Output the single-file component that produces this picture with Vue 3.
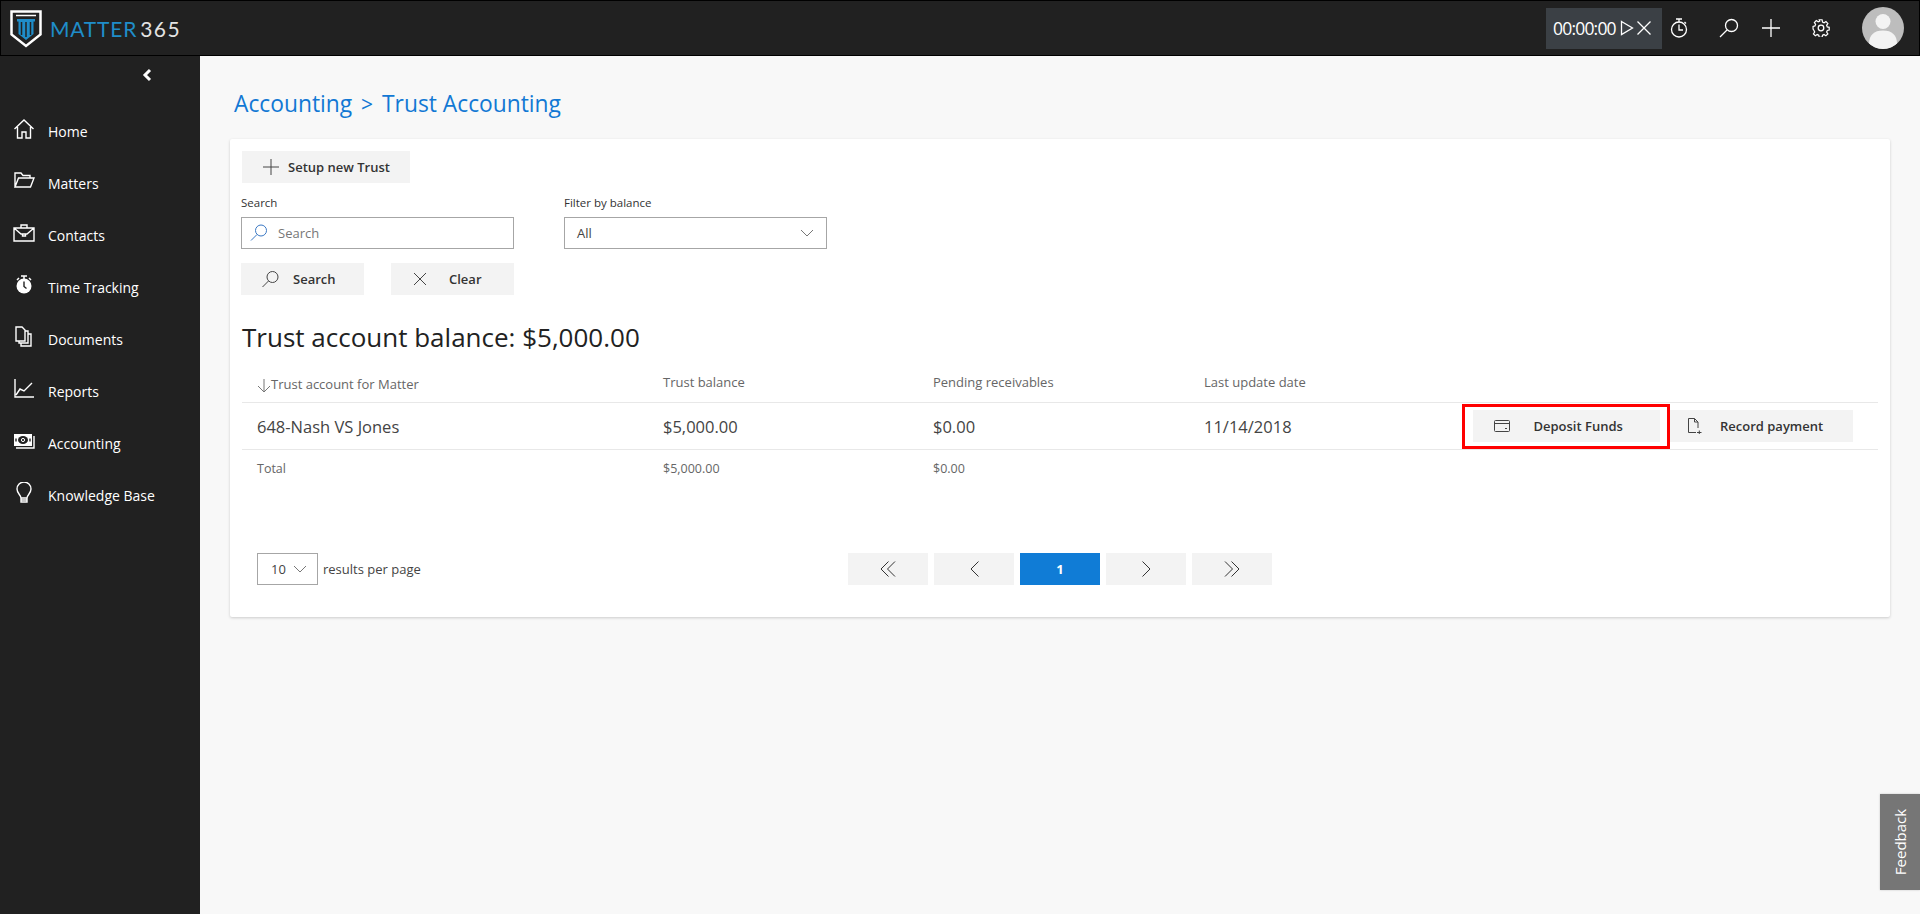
<template>
  <div class="app">
    <header class="topbar">
      <div class="logo">
        <svg width="32" height="38" viewBox="0 0 32 38">
          <path d="M1.500 1.500h29v23L16 36 1.500 24.500z" fill="#222" stroke="#fff" stroke-width="2.500" />
          <path d="M6 5.500h20" stroke="#fff" stroke-width="1.500" />
          <path d="M7 9h18v2.500h-1.500V24L16 30 8.500 24V11.500H7z" fill="#1f8dc9" />
          <path d="M11.500 12v13M16 12v15M20.500 12v13" stroke="#222" stroke-width="1.500" />
        </svg>
        <span class="logo-matter">MATTER</span><span class="logo-num">365</span>
      </div>
      <div class="top-right">
        <div class="timer">
          <span class="timer-time">00:00:00</span>
          <svg width="14" height="16" viewBox="0 0 14 16"><path d="M1.500 1.500 12.500 8 1.500 14.500z" class="line-w" /></svg>
          <svg width="16" height="16" viewBox="0 0 16 16"><path d="M1.500 1.500l13 13M14.500 1.500l-13 13" class="line-w" /></svg>
        </div>
        <svg class="ti t-watch" width="18" height="20" viewBox="0 0 18 20"><circle cx="9" cy="11.500" r="7.500" class="line-w" /><path d="M9 6.500V12h4M6 1h6M9 1v3M14.500 4l1.500 1.500" class="line-w" /></svg>
        <svg class="ti t-search" width="20" height="20" viewBox="0 0 20 20"><circle cx="12.500" cy="7.500" r="6" class="line-w" /><path d="M8 12 1 19" class="line-w" /></svg>
        <svg class="ti t-plus" width="20" height="20" viewBox="0 0 20 20"><path d="M10 1v18M1 10h18" class="line-w" /></svg>
        <svg class="ti t-gear" width="18" height="18" viewBox="0 0 18 18"><circle cx="9" cy="9" r="2.800" class="line-w" /><path d="M7.500 1h3l.5 2.400 1.600.7 2-1.300 2 2.100-1.300 2 .7 1.600 2 .5v2.800l-2 .5-.7 1.600 1.300 2-2.100 2-2-1.300-1.500.7-.5 2.200h-3l-.5-2.200-1.600-.7-2 1.300-2-2 1.300-2-.7-1.600L1 10.800V8l2-.5.7-1.600-1.300-2 2-2.100 2 1.300 1.600-.7z" class="line-w" transform="translate(.1 -.2) scale(.95)" /></svg>
        <div class="avatar">
          <svg width="42" height="42" viewBox="0 0 42 42"><circle cx="21" cy="14.500" r="7.500" fill="#f3f3f3" /><path d="M7 37c0-9 5-13.500 14-13.500S35 28 35 37c-4 3.500-9 5-14 5S11 40.500 7 37z" fill="#f3f3f3" /></svg>
        </div>
      </div>
    </header>

    <div class="body">
      <nav class="sidebar">
        <div class="collapse">
          <svg width="12" height="14" viewBox="0 0 12 14"><path d="M9 2 4 7l5 5" fill="none" stroke="#fff" stroke-width="3" /></svg>
        </div>
        <a v-for="item in navItems" :key="item.label" class="nav-item">
          <span class="nav-icon">
            <svg width="22" height="22" viewBox="0 0 22 22" v-html="item.icon"></svg>
          </span>
          <span>{{ item.label }}</span>
        </a>
      </nav>

      <main class="content">
        <h1 class="crumbs">Accounting <span class="sep">&gt;</span> Trust Accounting</h1>
        <section class="card">
          <button class="btn setup">
            <svg width="16" height="16" viewBox="0 0 16 16"><path d="M8 0v16M0 8h16" class="line-d" /></svg>
            <span>Setup new Trust</span>
          </button>

          <div class="filters">
            <div class="field search-field">
              <label>Search</label>
              <div class="box">
                <svg width="18" height="18" viewBox="0 0 18 18"><circle cx="11" cy="6.500" r="5.500" fill="none" stroke="#3a78c4" /><path d="M7 10.500 1 16.500" fill="none" stroke="#3a78c4" /></svg>
                <span class="placeholder">Search</span>
              </div>
            </div>
            <div class="field balance-field">
              <label>Filter by balance</label>
              <div class="box select">
                <span>All</span>
                <svg width="14" height="8" viewBox="0 0 14 8"><path d="M1 1l6 6 6-6" class="line-g" /></svg>
              </div>
            </div>
          </div>

          <div class="search-actions">
            <button class="btn action">
              <svg class="i-search" width="17" height="17" viewBox="0 0 17 17"><circle cx="10.500" cy="6" r="5.500" class="line-d" /><path d="M6.500 10 .5 16" class="line-d" /></svg>
              <span>Search</span>
            </button>
            <button class="btn action">
              <svg class="i-clear" width="14" height="14" viewBox="0 0 14 14"><path d="M1 1l12 12M13 1 1 13" class="line-d" /></svg>
              <span>Clear</span>
            </button>
          </div>

          <h2 class="balance">Trust account balance: $5,000.00</h2>

          <div class="table">
            <div class="row head">
              <div class="col first sort">
                <svg width="14" height="14" viewBox="0 0 14 14"><path d="M7 0v13M1 7l6 6 6-6" class="line-g" /></svg>
                <span>Trust account for Matter</span>
              </div>
              <div class="col second">Trust balance</div>
              <div class="col third">Pending receivables</div>
              <div class="col fourth">Last update date</div>
            </div>
            <div class="row data">
              <div class="col first">648-Nash VS Jones</div>
              <div class="col second">$5,000.00</div>
              <div class="col third">$0.00</div>
              <div class="col fourth">11/14/2018</div>
              <div class="row-actions">
                <div class="highlight">
                  <button class="btn deposit">
                    <svg width="16" height="12" viewBox="0 0 16 12"><rect x=".5" y=".5" width="15" height="11" rx="1" class="line-d" /><path d="M.5 3.500h15M11 8.500h2" class="line-d" /></svg>
                    <span>Deposit Funds</span>
                  </button>
                </div>
                <button class="btn record">
                  <svg width="15" height="16" viewBox="0 0 15 16"><path d="M9 14.500H1.500V.5h6l3.500 3.500v6M7.500.5V4H11M10 14.500h4.500M12.300 12.500v4" class="line-d" /></svg>
                  <span>Record payment</span>
                </button>
              </div>
            </div>
            <div class="row total">
              <div class="col first">Total</div>
              <div class="col second">$5,000.00</div>
              <div class="col third">$0.00</div>
            </div>
          </div>

          <div class="pager-row">
            <div class="per-page">
              <div class="box size">
                <span>10</span>
                <svg width="14" height="8" viewBox="0 0 14 8"><path d="M1 1l6 6 6-6" class="line-g" /></svg>
              </div>
              <span class="per-label">results per page</span>
            </div>
            <div class="pager">
              <button class="page"><svg width="16" height="16" viewBox="0 0 16 16"><path d="M8.500 .5 1 8l7.500 7.500M15 .5 7.500 8l7.500 7.500" class="line-p" /></svg></button>
              <button class="page"><svg width="9" height="16" viewBox="0 0 9 16"><path d="M8.500.5 1 8l7.500 7.500" class="line-p" /></svg></button>
              <button class="page active">1</button>
              <button class="page"><svg width="9" height="16" viewBox="0 0 9 16"><path d="M.5.5 8 8 .5 15.500" class="line-p" /></svg></button>
              <button class="page"><svg width="16" height="16" viewBox="0 0 16 16"><path d="M1 .5 8.500 8 1 15.500M7.500.5 15 8l-7.500 7.500" class="line-p" /></svg></button>
            </div>
          </div>
        </section>
      </main>
    </div>

    <div class="feedback"><span>Feedback</span></div>
  </div>
</template>

<script setup>
const s = 'fill="none" stroke="#fff" stroke-width="1.400"'
const navItems = [
  { label: 'Home', icon: `<path d="M1.500 11 11 2l9.500 9M4.500 9v11h4.500v-6h4v6h4.500V9" ${s}/>` },
  { label: 'Matters', icon: `<path d="M2 17V3h6l2 2.500h7V8M2 17h15.500L21 8H5.500L2 17z" ${s}/>` },
  { label: 'Contacts', icon: `<path d="M1 6h20v13H1zM1 6l7 6h6l7-6M8 6V3h6v3M9.500 12v2h3v-2" ${s}/>` },
  { label: 'Time Tracking', icon: `<circle cx="11" cy="12" r="7.500" fill="#fff"/><path d="M11 7v5.500l3 2M8 2h6M11 2v3M4 6l2-2M18 6l-2-2" fill="none" stroke="#fff" stroke-width="1.500"/><path d="M11 7.500v5l2.500 2" fill="none" stroke="#222" stroke-width="1.400"/>` },
  { label: 'Documents', icon: `<path d="M3 1h6l3 3v11H3zM12 5h3v12H6v-2M15 8h3v12H8v-3" ${s}/>` },
  { label: 'Reports', icon: `<path d="M2 1v18h19M3 17l4-6 4 2 8-8" ${s}/>` },
  { label: 'Accounting', icon: `<path d="M1 4h18v12H1z" fill="#fff"/><path d="M3 18h18V6" ${s}/><ellipse cx="10" cy="10" rx="5" ry="4" fill="#222"/><circle cx="10" cy="10" r="1.600" fill="none" stroke="#fff"/><path d="M3 8.500v3M17 8.500v3" stroke="#222" stroke-width="1.400"/>` },
  { label: 'Knowledge Base', icon: `<path d="M8 16c0-3-4-4.500-4-9a7 7 0 0 1 14 0c0 4.500-4 6-4 9zM8 16v4h6v-4M8 18h6" ${s}/>` }
]
</script>

<style>
html, body {
  margin: 0;
  overflow: hidden;
}
</style>

<style scoped>
.app {
  position: relative;
  display: flex;
  flex-direction: column;
  height: 914px;
  width: 1920px;
  font-family: "Open Sans", "Noto Sans", sans-serif;
  background: #f8f8f8;
  overflow: hidden;
}

.topbar {
  box-sizing: border-box;
  height: 56px;
  flex: none;
  display: flex;
  justify-content: space-between;
  align-items: center;
  background: #212121;
  border: 1px solid #000;
}

.logo {
  display: flex;
  align-items: center;
  padding-left: 9px;
  font-family: Lato, sans-serif;
  font-size: 21px;
}

.logo svg {
  margin-right: 8px;
  margin-top: 1px;
}

.logo-matter {
  color: #1f8dc9;
  letter-spacing: .8px;
}

.logo-num {
  color: #e4e4e4;
  margin-left: 3px;
  letter-spacing: 1.500px;
}

.top-right {
  display: flex;
  align-items: center;
  height: 100%;
}

.timer {
  display: flex;
  align-items: center;
  gap: 2px;
  height: 41px;
  width: 116px;
  box-sizing: border-box;
  padding-left: 7px;
  background: #3b4045;
  color: #fff;
  font-size: 17.500px;
  letter-spacing: -.8px;
}

.timer svg:first-of-type {
  margin-left: 2px;
}

.line-w {
  fill: none;
  stroke: #fff;
  stroke-width: 1.300;
}

.line-d {
  fill: none;
  stroke: #444;
  stroke-width: 1;
}

.line-g {
  fill: none;
  stroke: #777;
  stroke-width: 1;
}

.line-p {
  fill: none;
  stroke: #333;
  stroke-width: 1;
}

.t-watch { margin-left: 8px; }
.t-search { margin-left: 31px; }
.t-plus { margin-left: 22px; }
.t-gear { margin-left: 31px; }

.avatar {
  width: 42px;
  height: 42px;
  margin-left: 32px;
  margin-right: 15px;
  border-radius: 50%;
  background: #bdbdbd;
  overflow: hidden;
}

.avatar svg {
  display: block;
}

.body {
  flex: 1;
  display: flex;
  min-height: 0;
}

.sidebar {
  width: 200px;
  flex: none;
  background: #212121;
  color: #fff;
  font-size: 14px;
}

.collapse {
  display: flex;
  justify-content: flex-end;
  align-items: center;
  height: 38px;
  padding: 0 47px 0 0;
  margin-bottom: 11px;
}

.nav-item {
  display: flex;
  align-items: center;
  height: 52px;
  padding-left: 13px;
}

.nav-icon {
  width: 35px;
  display: flex;
  margin-top: -4px;
}

.content {
  flex: 1;
  min-width: 0;
  padding: 0 30px;
}

.crumbs {
  margin: 0;
  padding: 32px 0 0 4px;
  height: 51px;
  font-size: 22.800px;
  font-weight: 400;
  line-height: 32px;
  color: #1278d4;
}

.sep {
  margin: 0 3px;
  font-size: 21px;
}

.card {
  box-sizing: border-box;
  height: 478px;
  padding: 12px 12px 0 11px;
  background: #fff;
  border-radius: 2px;
  box-shadow: 0 1px 3px rgba(0, 0, 0, .18);
}

.btn {
  display: inline-flex;
  align-items: center;
  height: 32px;
  padding: 0;
  border: none;
  background: #f3f3f3;
  color: #333;
  font-family: inherit;
  font-size: 13px;
  font-weight: 600;
}

.setup {
  margin-left: 1px;
  width: 168px;
  padding-left: 21px;
  gap: 9px;
}

.filters {
  display: flex;
  gap: 50px;
  margin-top: 12px;
}

.field label {
  display: block;
  height: 22px;
  font-size: 11.500px;
  line-height: 16px;
  color: #333;
}

.search-field { width: 273px; }
.balance-field { width: 263px; }

.box {
  box-sizing: border-box;
  display: flex;
  align-items: center;
  height: 32px;
  border: 1px solid #a6a6a6;
  background: #fff;
  font-size: 13px;
  color: #444;
}

.search-field .box {
  padding-left: 8px;
  gap: 10px;
}

.placeholder {
  color: #777;
}

.select {
  justify-content: space-between;
  padding: 0 12px;
}

.search-actions {
  display: flex;
  gap: 27px;
  margin-top: 14px;
}

.action {
  width: 123px;
}

.i-search {
  margin-left: 21px;
  margin-right: 14px;
}

.i-clear {
  margin-left: 22px;
  margin-right: 22px;
}

.balance {
  margin: 25px 0 0 1px;
  height: 41px;
  font-size: 26px;
  font-weight: 400;
  line-height: 34px;
  color: #222;
}

.table {
  margin-left: 1px;
  margin-right: 0;
}

.row {
  box-sizing: border-box;
  display: flex;
  align-items: center;
  color: #444;
}

.col {
  box-sizing: border-box;
  flex: none;
}

.first { width: 421px; padding-left: 15px; }
.second { width: 270px; }
.third { width: 271px; }
.fourth { width: 258px; }

.head {
  height: 42px;
  font-size: 13px;
  color: #666;
  border-bottom: 1px solid #e8e8e8;
}

.sort {
  display: flex;
  align-items: flex-end;
  gap: 0;
  padding-top: 4px;
}

.data {
  height: 47px;
  font-size: 16.500px;
  border-bottom: 1px solid #e8e8e8;
}

.row-actions {
  display: flex;
  align-items: center;
}

.highlight {
  box-sizing: border-box;
  display: flex;
  align-items: center;
  justify-content: center;
  width: 208px;
  height: 45px;
  border: 3px solid #f00;
}

.deposit {
  width: 187px;
  padding-left: 21px;
  gap: 24px;
}

.record {
  width: 183px;
  padding-left: 17px;
  gap: 18px;
}

.total {
  height: 36px;
  font-size: 12.500px;
  color: #666;
}

.pager-row {
  display: flex;
  align-items: center;
  margin-top: 67px;
  padding-left: 16px;
}

.per-page {
  display: flex;
  align-items: center;
  gap: 5px;
  width: 591px;
  font-size: 13px;
  color: #444;
}

.size {
  width: 61px;
  padding: 0 10px 0 13px;
  justify-content: space-between;
}

.pager {
  display: flex;
  gap: 6px;
}

.page {
  width: 80px;
  height: 32px;
  padding: 0;
  border: none;
  display: flex;
  align-items: center;
  justify-content: center;
  background: #f3f3f3;
  font-family: inherit;
  font-size: 13px;
  font-weight: 700;
}

.active {
  background: #107cd6;
  color: #fff;
}

.feedback {
  position: absolute;
  left: 1880px;
  top: 794px;
  width: 40px;
  height: 96px;
  display: flex;
  align-items: center;
  justify-content: center;
  background: #767676;
  color: #fff;
  font-size: 15px;
  box-shadow: 0 0 2px rgba(0, 0, 0, .2);
}

.feedback span {
  transform: rotate(-90deg);
}
</style>
